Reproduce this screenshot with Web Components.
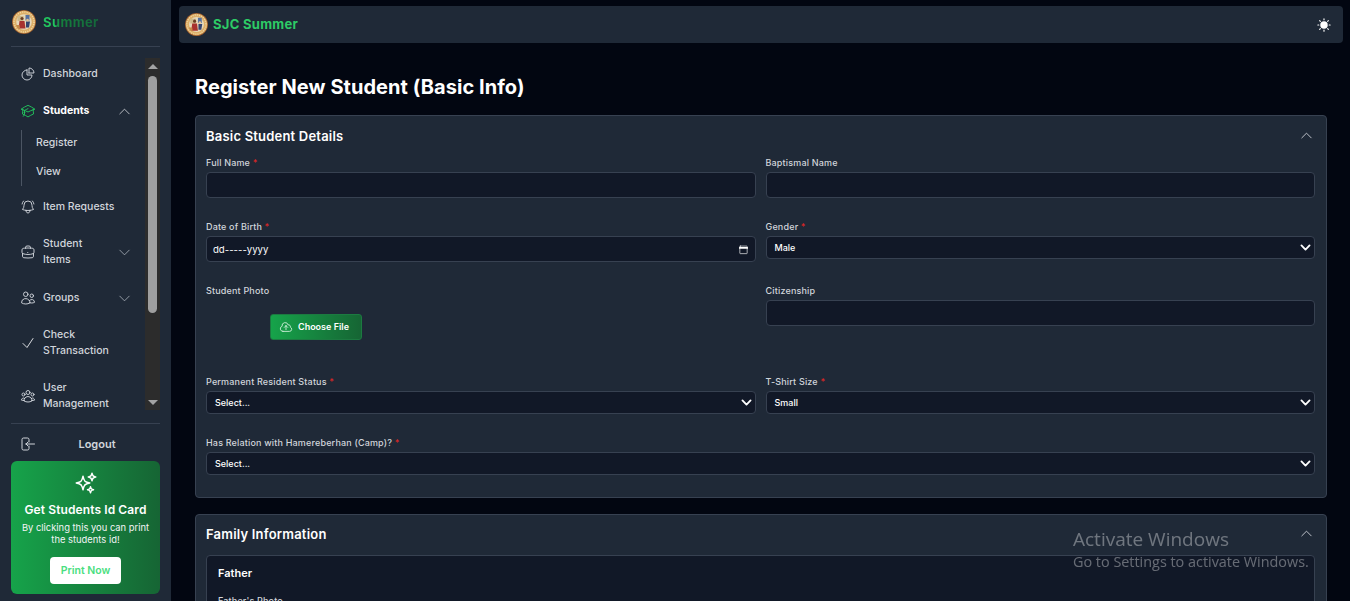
<!DOCTYPE html>
<html lang="en">
<head>
<meta charset="utf-8">
<title>Register New Student</title>
<style>
  html, body { margin: 0; height: 100%; overflow: hidden; background: #020611; }
  body { font-family: Inter, "Liberation Sans", sans-serif; color: #fff; }
</style>
</head>
<body>
<app-shell>
  <side-bar slot="side">
    <nav-item icon="pie">Dashboard</nav-item>
    <nav-item icon="cap" active chevron="up">Students</nav-item>
    <sub-menu style="margin-top:-2px">
      <sub-item>Register</sub-item>
      <sub-item>View</sub-item>
    </sub-menu>
    <nav-item icon="bell" style="margin-top:3px">Item Requests</nav-item>
    <nav-item icon="briefcase" chevron="down">Student Items</nav-item>
    <nav-item icon="users" chevron="down" style="margin-top:2px">Groups</nav-item>
    <nav-item icon="check" style="--lead:#e5e7eb">Check STransaction</nav-item>
    <nav-item icon="group">User Management</nav-item>
  </side-bar>

  <top-bar slot="top"></top-bar>

  <page-title>Register New Student (Basic Info)</page-title>

  <form-card heading="Basic Student Details">
    <form-grid>
      <form-field label="Full Name" required><text-box></text-box></form-field>
      <form-field label="Baptismal Name"><text-box></text-box></form-field>
      <form-field label="Date of Birth" required><date-box></date-box></form-field>
      <form-field label="Gender" required><select-box value="Male"></select-box></form-field>
      <form-field label="Student Photo"><file-picker></file-picker></form-field>
      <form-field label="Citizenship"><text-box></text-box></form-field>
      <form-field label="Permanent Resident Status" required><select-box value="Select..."></select-box></form-field>
      <form-field label="T-Shirt Size" required><select-box value="Small"></select-box></form-field>
      <form-field label="Has Relation with Hamereberhan (Camp)?" required wide><select-box value="Select..."></select-box></form-field>
    </form-grid>
  </form-card>

  <form-card heading="Family Information" style="--head-h:37px">
    <parent-box heading="Father" style="margin-top:3px">
      <form-field label="Father's Photo"></form-field>
    </parent-box>
  </form-card>
</app-shell>
<activate-note></activate-note>

<script>
const ICONS = {
  pie: '<path d="M10.5 6a7.5 7.5 0 1 0 7.5 7.5h-7.5V6Z"/><path d="M13.5 10.5H21A7.5 7.5 0 0 0 13.5 3v7.5Z"/>',
  cap: '<path d="M4.26 10.147a60.438 60.438 0 0 0-.491 6.347A48.62 48.62 0 0 1 12 20.904a48.62 48.62 0 0 1 8.232-4.41 60.46 60.46 0 0 0-.491-6.347m-15.482 0a50.636 50.636 0 0 0-2.658-.813A59.906 59.906 0 0 1 12 3.493a59.903 59.903 0 0 1 10.399 5.84c-.896.248-1.783.52-2.658.814m-15.482 0A50.717 50.717 0 0 1 12 13.489a50.702 50.702 0 0 1 7.74-3.342M6.75 15a.75.75 0 1 0 0-1.5.75.75 0 0 0 0 1.5Zm0 0v-3.675A55.378 55.378 0 0 1 12 8.443m-7.007 11.55A5.981 5.981 0 0 0 6.75 15.75v-1.5"/>',
  bell: '<path d="M14.857 17.082a23.848 23.848 0 0 0 5.454-1.31A8.967 8.967 0 0 1 18 9.75V9A6 6 0 0 0 6 9v.75a8.967 8.967 0 0 1-2.312 6.022c1.733.64 3.56 1.085 5.455 1.31m5.714 0a24.255 24.255 0 0 1-5.714 0m5.714 0a3 3 0 1 1-5.714 0M3.124 7.5A8.969 8.969 0 0 1 5.292 3m13.416 0a8.969 8.969 0 0 1 2.168 4.5"/>',
  briefcase: '<path d="M20.25 14.15v4.25c0 1.094-.787 2.036-1.872 2.18-2.087.277-4.216.42-6.378.42s-4.291-.143-6.378-.42c-1.085-.144-1.872-1.086-1.872-2.18v-4.25m16.5 0a2.18 2.18 0 0 0 .75-1.661V8.706c0-1.081-.768-2.015-1.837-2.175a48.114 48.114 0 0 0-3.413-.387m4.5 8.006c-.194.165-.42.295-.673.38A23.978 23.978 0 0 1 12 15.75c-2.648 0-5.195-.429-7.577-1.22a2.016 2.016 0 0 1-.673-.38m0 0A2.18 2.18 0 0 1 3 12.489V8.706c0-1.081.768-2.015 1.837-2.175a48.111 48.111 0 0 1 3.413-.387m7.5 0V5.25A2.25 2.25 0 0 0 13.5 3h-3a2.25 2.25 0 0 0-2.25 2.25v.894m7.5 0a48.667 48.667 0 0 0-7.5 0M12 12.75h.008v.008H12v-.008Z"/>',
  users: '<path d="M15 19.128a9.38 9.38 0 0 0 2.625.372 9.337 9.337 0 0 0 4.121-.952 4.125 4.125 0 0 0-7.533-2.493M15 19.128v-.003c0-1.113-.285-2.16-.786-3.07M15 19.128v.106A12.318 12.318 0 0 1 8.624 21c-2.331 0-4.512-.645-6.374-1.766l-.001-.109a6.375 6.375 0 0 1 11.964-3.07M12 6.375a3.375 3.375 0 1 1-6.75 0 3.375 3.375 0 0 1 6.75 0Zm8.25 2.25a2.625 2.625 0 1 1-5.25 0 2.625 2.625 0 0 1 5.25 0Z"/>',
  check: '<path d="m4.5 12.75 6 6 9-13.5"/>',
  group: '<path d="M18 18.72a9.094 9.094 0 0 0 3.741-.479 3 3 0 0 0-4.682-2.72m.94 3.198.001.031c0 .225-.012.447-.037.666A11.944 11.944 0 0 1 12 21c-2.17 0-4.207-.576-5.963-1.584A6.062 6.062 0 0 1 6 18.719m12 0a5.971 5.971 0 0 0-.941-3.197m0 0A5.995 5.995 0 0 0 12 12.75a5.995 5.995 0 0 0-5.058 2.772m0 0a3 3 0 0 0-4.681 2.72 8.986 8.986 0 0 0 3.74.477m.94-3.197a5.971 5.971 0 0 0-.94 3.197M15 6.75a3 3 0 1 1-6 0 3 3 0 0 1 6 0Zm6 3a2.25 2.25 0 1 1-4.5 0 2.25 2.25 0 0 1 4.5 0Zm-13.5 0a2.25 2.25 0 1 1-4.5 0 2.25 2.25 0 0 1 4.5 0Z"/>',
  logout: '<path d="M13.5 9V5.25A2.25 2.25 0 0 0 11.25 3h-6A2.25 2.25 0 0 0 3 5.25v13.5A2.25 2.25 0 0 0 5.25 21h6a2.25 2.25 0 0 0 2.25-2.25V15"/><path d="M21.75 12H9m0 0 3-3m-3 3 3 3"/>',
  sparkles: '<path d="M9.813 15.904 9 18.75l-.813-2.846a4.5 4.5 0 0 0-3.09-3.09L2.25 12l2.846-.813a4.5 4.5 0 0 0 3.09-3.09L9 5.25l.813 2.846a4.5 4.5 0 0 0 3.09 3.09L15.75 12l-2.846.813a4.5 4.5 0 0 0-3.09 3.09ZM18.259 8.715 18 9.75l-.259-1.035a3.375 3.375 0 0 0-2.455-2.456L14.25 6l1.036-.259a3.375 3.375 0 0 0 2.455-2.456L18 2.25l.259 1.035a3.375 3.375 0 0 0 2.456 2.456L21.75 6l-1.035.259a3.375 3.375 0 0 0-2.456 2.456ZM16.894 20.567 16.5 21.75l-.394-1.183a2.25 2.25 0 0 0-1.423-1.423L13.5 18.75l1.183-.394a2.25 2.25 0 0 0 1.423-1.423l.394-1.183.394 1.183a2.25 2.25 0 0 0 1.423 1.423l1.183.394-1.183.394a2.25 2.25 0 0 0-1.423 1.423Z"/>',
  cloud: '<path d="M12 16.5V9.75m0 0 3 3m-3-3-3 3M6.75 19.5a4.5 4.5 0 0 1-1.41-8.775 5.25 5.25 0 0 1 10.233-2.33 3 3 0 0 1 3.758 3.848A3.752 3.752 0 0 1 18 19.5H6.75Z"/>',
  up: '<path d="m4.5 15.75 7.5-7.5 7.5 7.5"/>',
  down: '<path d="m19.5 8.25-7.5 7.5-7.5-7.5"/>',
  calendar: '<path d="M5 4.5h14a1 1 0 0 1 1 1V20a1 1 0 0 1-1 1H5a1 1 0 0 1-1-1V5.5a1 1 0 0 1 1-1Z"/><path d="M4 8.5h16" stroke-width="4"/>',
  sun: '<circle cx="12" cy="12" r="6.4" fill="currentColor" stroke="none"/><path d="M12 1.5v1.6M12 20.9v1.6M1.5 12h1.6M20.9 12h1.6M4.6 4.6l1.1 1.1M18.3 18.3l1.1 1.1M4.6 19.4l1.1-1.1M18.3 5.7l1.1-1.1"/>'
};

function define(name, html, init) {
  customElements.define(name, class extends HTMLElement {
    constructor() {
      super();
      this.attachShadow({mode: 'open'}).innerHTML = typeof html === 'function' ? html(this) : html;
    }
    connectedCallback() {
      if (init) init(this);
    }
  });
}

define('hero-icon', `
  <style>
    :host { display: inline-flex; flex: none; width: var(--size, 16px); height: var(--size, 16px); }
    svg { width: 100%; height: 100%; fill: none; stroke: currentColor; stroke-width: var(--sw, 1.5); stroke-linecap: round; stroke-linejoin: round; }
  </style>
  <svg viewBox="0 0 24 24"></svg>
`, el => {
  el.shadowRoot.querySelector('svg').innerHTML = ICONS[el.getAttribute('name')] || '';
});

define('brand-seal', `
  <style>
    :host { display: block; flex: none; width: var(--size, 24px); height: var(--size, 24px); }
    svg { display: block; width: 100%; height: 100%; }
  </style>
  <svg viewBox="0 0 48 48">
    <circle cx="24" cy="24" r="24" fill="#9a5a2c"/>
    <circle cx="24" cy="24" r="22.4" fill="#dcae68"/>
    <circle cx="24" cy="24" r="20" fill="none" stroke="#f3d9a4" stroke-width="3" stroke-dasharray="2 2.5"/>
    <circle cx="24" cy="24" r="15.5" fill="#e6d8ba"/>
    <path d="M11 12h12v10H11z" fill="#cdb88a"/>
    <path d="M27 10h8v11h-8z" fill="#56709f"/>
    <path d="M15 22h10l2 15H13z" fill="#a8322f"/>
    <path d="M28 23h8l-2 12h-6z" fill="#35456f"/>
    <circle cx="20" cy="17" r="3.2" fill="#6b3d22"/>
    <circle cx="31" cy="20" r="2.6" fill="#e3c191"/>
    <path d="M8 30h7l1 7H11z" fill="#c58a4a"/>
  </svg>
`);

define('app-shell', `
  <style>
    :host { display: flex; height: 601px; overflow: hidden; }
    .main { flex: 1; min-width: 0; padding: 6px 7px 0 8px; }
    .content { padding: 0 16px; }
  </style>
  <slot name="side"></slot>
  <div class="main">
    <slot name="top"></slot>
    <div class="content"><slot></slot></div>
  </div>
`);

define('side-bar', `
  <style>
    :host { display: flex; flex-direction: column; flex: none; width: 171px; height: 601px; box-sizing: border-box; padding: 0 11px 7px; background: #1f2937; }
    .brand { display: flex; align-items: center; gap: 7px; height: 47px; padding: 0 1px 3px; box-sizing: border-box; border-bottom: 1px solid #374151; }
    .brand span { font-size: 13px; font-weight: 700; letter-spacing: .4px; background: linear-gradient(90deg, #22c55e 0, #22c55e 20%, #15803d 30%, #14673a 100%); -webkit-background-clip: text; background-clip: text; color: transparent; }
    .scroll { display: flex; height: 352px; margin-top: 11px; overflow: hidden; }
    .list { flex: 1; min-width: 0; margin-top: -2px; }
    .track { flex: none; width: 15px; display: flex; flex-direction: column; align-items: center; background: #2c2c2c; }
    .arrow { flex: none; width: 0; height: 0; border-left: 5px solid transparent; border-right: 5px solid transparent; }
    .arrow.up { margin-top: 6px; border-bottom: 5px solid #a3a3a3; }
    .arrow.dn { margin-top: auto; margin-bottom: 5px; border-top: 5px solid #a3a3a3; }
    .thumb { width: 9px; height: 237px; margin-top: 7px; border-radius: 5px; background: #9f9f9f; }
    .logout { display: flex; align-items: center; height: 38px; margin-top: 13px; padding: 2px 0 0 9px; box-sizing: border-box; border-top: 1px solid #374151; color: #d1d5db; font-size: 11px; font-weight: 600; }
    .logout span { flex: 1; text-align: center; padding-right: 2px; }
    hero-icon { --size: 16px; }
  </style>
  <div class="brand"><brand-seal></brand-seal><span>Summer</span></div>
  <div class="scroll">
    <div class="list"><slot></slot></div>
    <div class="track"><div class="arrow up"></div><div class="thumb"></div><div class="arrow dn"></div></div>
  </div>
  <div class="logout"><hero-icon name="logout"></hero-icon><span>Logout</span></div>
  <promo-card></promo-card>
`);

define('nav-item', el => `
  <style>
    :host { display: flex; align-items: center; box-sizing: border-box; gap: 7px; padding: 10px 15px 10px 9px; margin-bottom: 1px; color: #d1d5db; font-size: 10.5px; font-weight: 500; line-height: 16px; }
    :host([active]) { color: #fff; font-weight: 700; }
    :host([active]) .lead { color: #22c55e; }
    :host([active]) .chev { color: #e5e7eb; }
    .label { flex: 1; min-width: 0; }
    .lead { --size: 16px; --sw: 1.4; color: var(--lead, inherit); }
    .chev { --size: 15px; --sw: 1.2; color: #b6bcc6; margin: 0 -2px 0 5px; }
  </style>
  <hero-icon class="lead" name="${el.getAttribute('icon')}"></hero-icon>
  <span class="label"><slot></slot></span>
  ${el.hasAttribute('chevron') ? `<hero-icon class="chev" name="${el.getAttribute('chevron')}"></hero-icon>` : ''}
`);

define('sub-menu', `
  <style>
    :host { display: block; position: relative; padding-left: 25px; }
    :host::before { content: ""; position: absolute; left: 10px; top: 2px; bottom: 0; width: 1px; background: #4b5563; }
  </style>
  <slot></slot>
`);

define('sub-item', `
  <style>
    :host { display: flex; align-items: center; height: 29px; color: #d1d5db; font-size: 10.5px; font-weight: 500; }
  </style>
  <slot></slot>
`);

define('promo-card', `
  <style>
    :host { display: flex; flex-direction: column; align-items: center; height: 133px; box-sizing: border-box; padding-top: 10px; border-radius: 6px; background: linear-gradient(90deg, #16a34a, #166534); text-align: center; }
    hero-icon { --size: 24px; --sw: 1.5; color: #fff; }
    h3 { margin: 7px 0 0; font-size: 12px; line-height: 16px; font-weight: 600; letter-spacing: .1px; color: #fff; }
    p { margin: 4px 0 0; font-size: 9.4px; line-height: 12px; color: #f3f4f6; }
    button { margin-top: 11px; width: 71px; height: 27px; padding: 0; border: 0; border-radius: 4px; background: #fff; color: #4ade80; font: 600 10.5px Inter, "Liberation Sans", sans-serif; }
  </style>
  <hero-icon name="sparkles"></hero-icon>
  <h3>Get Students Id Card</h3>
  <p>By clicking this you can print<br>the students id!</p>
  <button>Print Now</button>
`);

define('top-bar', `
  <style>
    :host { display: flex; align-items: center; height: 37px; box-sizing: border-box; padding: 0 12px 0 6px; gap: 5px; border-radius: 4px; background: #1f2937; }
    span { flex: 1; padding-bottom: 1px; font-size: 13px; font-weight: 700; letter-spacing: .3px; color: #2dcb66; }
    brand-seal { --size: 23px; }
    hero-icon { --size: 14px; --sw: 2; color: #fff; }
  </style>
  <brand-seal></brand-seal><span>SJC Summer</span><hero-icon name="sun"></hero-icon>
`);

define('page-title', `
  <style>
    :host { display: block; margin: 30px 0 14px; font-size: 20px; line-height: 28px; font-weight: 700; letter-spacing: .06px; color: #fff; }
  </style>
  <slot></slot>
`);

define('form-card', el => `
  <style>
    :host { display: block; box-sizing: border-box; margin-bottom: 16px; padding: 0 11px 22px 10px; border: 1px solid #374151; border-radius: 4px; background: #1f2937; }
    .head { display: flex; align-items: center; justify-content: space-between; height: var(--head-h, 39px); font-size: 13px; font-weight: 600; letter-spacing: .2px; color: #fff; }
    hero-icon { --size: 15px; --sw: 1.4; color: #d1d5db; margin-right: 1px; }
  </style>
  <div class="head"><span>${el.getAttribute('heading')}</span><hero-icon name="up"></hero-icon></div>
  <slot></slot>
`);

define('form-grid', `
  <style>
    :host { display: grid; grid-template-columns: 1fr 1fr; column-gap: 10px; row-gap: 21px; }
  </style>
  <slot></slot>
`);

define('form-field', el => `
  <style>
    :host { display: block; min-width: 0; }
    :host([wide]) { grid-column: 1 / -1; }
    label { display: block; height: 14px; margin-bottom: 3px; font-size: 9px; line-height: 16px; font-weight: 500; letter-spacing: .17px; color: #d1d5db; }
    i { font-style: normal; color: #dc2626; }
  </style>
  <label>${el.getAttribute('label')}${el.hasAttribute('required') ? ' <i>*</i>' : ''}</label>
  <slot></slot>
`);

const BOX_CSS = `
  box-sizing: border-box; width: 100%; border: 1px solid #374151; border-radius: 4px;
  background: #111827; color: #fff; font-family: Inter, "Liberation Sans", sans-serif;
`;

define('text-box', `
  <style>
    :host { display: block; }
    input { ${BOX_CSS} display: block; height: 26px; padding: 0 7px; font-size: 10px; outline: 0; }
  </style>
  <input type="text">
`);

define('date-box', `
  <style>
    :host { ${BOX_CSS} display: flex; align-items: center; justify-content: space-between; height: 26px; padding: 1px 6px 0 6px; font-size: 9.6px; font-weight: 400; }
    hero-icon { --size: 11px; --sw: 1.4; color: #fff; }
  </style>
  <span>dd-----yyyy</span><hero-icon name="calendar"></hero-icon>
`);

define('select-box', el => `
  <style>
    :host { ${BOX_CSS} display: flex; align-items: center; justify-content: space-between; height: 23px; padding: 0 2px 0 8px; font-size: 9px; font-weight: 500; }
    hero-icon { --size: 13px; --sw: 3.4; color: #fff; }
  </style>
  <span>${el.getAttribute('value')}</span><hero-icon name="down"></hero-icon>
`);

define('file-picker', `
  <style>
    :host { display: block; height: 53px; padding: 14px 0 0 64px; box-sizing: border-box; }
    button { display: flex; align-items: center; gap: 5px; width: 92px; height: 26px; padding: 0 0 1px 8px; box-sizing: border-box; border: 1px solid #1c7a41; border-radius: 3px; background: linear-gradient(90deg, #16a34a, #166534); color: #fff; font: 600 9px Inter, "Liberation Sans", sans-serif; }
    hero-icon { --size: 14px; --sw: 1.5; color: #d1f0dc; }
  </style>
  <button><hero-icon name="cloud"></hero-icon>Choose File</button>
`);

define('parent-box', el => `
  <style>
    :host { display: block; box-sizing: border-box; padding: 10px 11px 11px; border: 1px solid #374151; border-radius: 4px; background: #111827; height: 200px; }
    h4 { margin: 0 0 13px; font-size: 11px; line-height: 14px; font-weight: 600; color: #fff; }
  </style>
  <h4>${el.getAttribute('heading')}</h4>
  <slot></slot>
`);

// sits over everything, the same way the OS watermark does
define('activate-note', `
  <style>
    :host { position: fixed; left: 1073px; top: 527px; font-family: "Open Sans", "Noto Sans", sans-serif; color: rgba(255,255,255,.36); pointer-events: none; white-space: nowrap; }
    div { font-size: 19px; line-height: 24px; }
    p { margin: 0; font-size: 14.4px; line-height: 22px; }
  </style>
  <div>Activate Windows</div>
  <p>Go to Settings to activate Windows.</p>
`);
</script>
</body>
</html>
